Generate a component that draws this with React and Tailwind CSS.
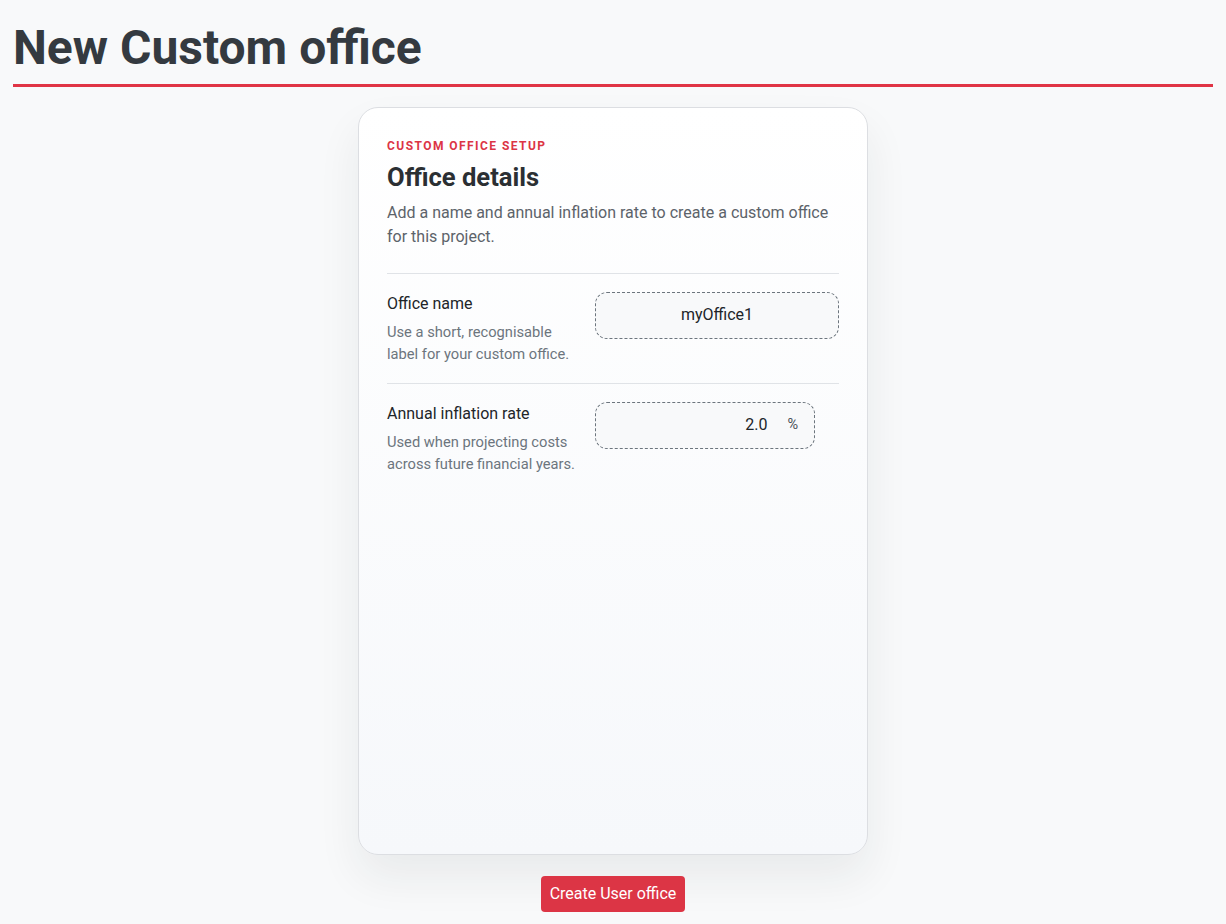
export default function App() {
  return (
    <div className="min-h-[924px] bg-[#f8f9fa] px-[13px] font-['Roboto',sans-serif] text-[#212529]">
      <h1 className="border-b-[3px] border-[#e03445] pt-[19px] pb-[7px] text-[48px] font-bold leading-[1.2] text-[#343a40]">
        New Custom office
      </h1>

      <div className="flex flex-col items-center pt-[20px]">
        <div className="h-[748px] w-[510px] rounded-[20px] border border-[#dcdee2] bg-gradient-to-b from-white to-[#f6f8fb] px-[28px] pt-[30px] shadow-[0_22px_44px_rgba(33,37,41,0.07)]">
          <div className="text-[12px] font-bold uppercase leading-[16px] tracking-[0.12em] text-[#dc3545]">
            Custom office setup
          </div>
          <h2 className="mt-[7px] text-[25.6px] font-bold leading-[32px] text-[#2b2f33]">
            Office details
          </h2>
          <p className="mt-[8px] text-[16px] leading-[24px] text-[#5c636a]">
            Add a name and annual inflation rate to create a custom office for this project.
          </p>

          <div className="mt-[24px] border-t border-[#e0e3e7]">
            <div className="flex items-start gap-[20px] border-b border-[#e0e3e7] pt-[18px] pb-[18px]">
              <div className="w-[188px] pt-[1px]">
                <div className="text-[16px] leading-[22px] text-[#212529]">Office name</div>
                <div className="mt-[6px] text-[14.7px] leading-[22px] text-[#6c757d]">
                  Use a short, recognisable label for your custom office.
                </div>
              </div>
              <div className="flex h-[47px] w-[244px] items-center justify-center rounded-[12px] border border-dashed border-[#6c757d] bg-[#f8f9fa] text-[16px] text-[#212529]">
                myOffice1
              </div>
            </div>

            <div className="flex items-start gap-[20px] pt-[18px] pb-[18px]">
              <div className="w-[188px] pt-[1px]">
                <div className="text-[16px] leading-[22px] text-[#212529]">Annual inflation rate</div>
                <div className="mt-[6px] text-[14.7px] leading-[22px] text-[#6c757d]">
                  Used when projecting costs across future financial years.
                </div>
              </div>
              <div className="flex h-[47px] w-[220px] items-center justify-end gap-[20px] rounded-[12px] border border-dashed border-[#6c757d] bg-[#f8f9fa] pr-[16px] text-[#212529]">
                <span className="text-[16px]">2.0</span>
                <span className="text-[14.5px] text-[#495057]">%</span>
              </div>
            </div>
          </div>
        </div>

        <button className="mt-[21px] h-[36px] rounded-[4px] bg-[#dc3545] px-[9px] text-[16px] text-white">
          Create User office
        </button>
      </div>
    </div>
  );
}
